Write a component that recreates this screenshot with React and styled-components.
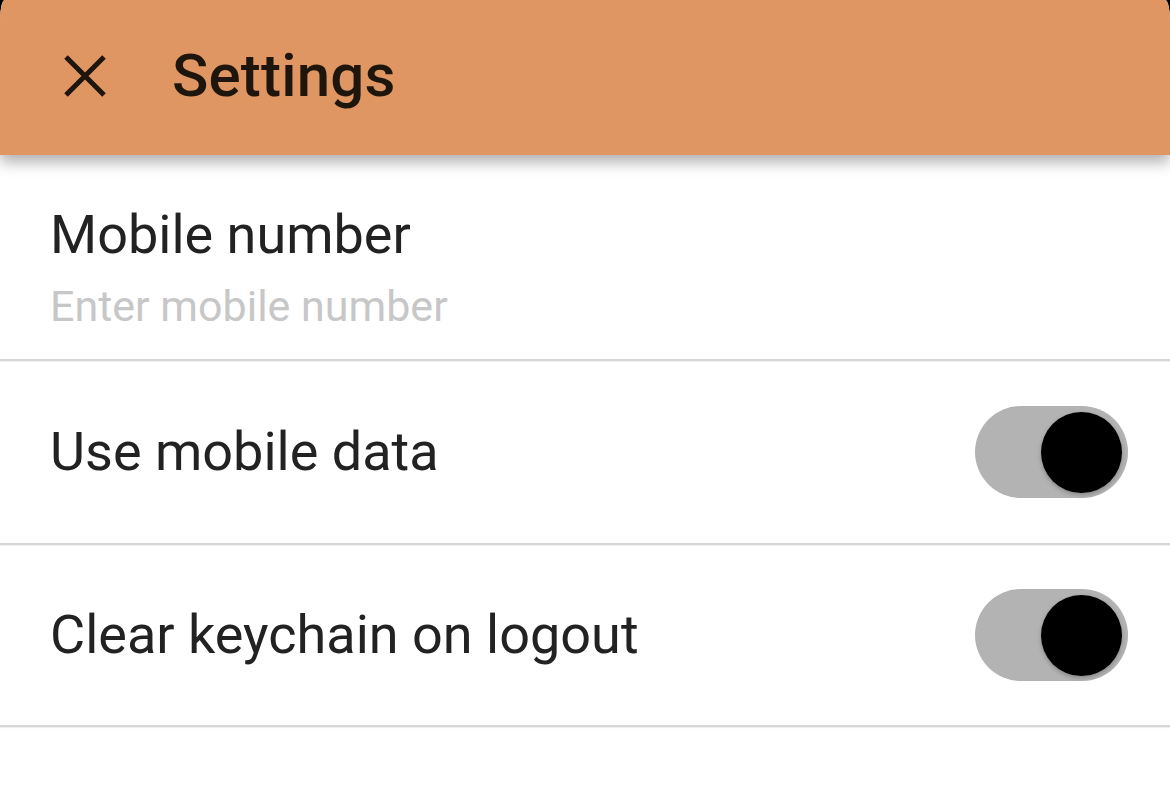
import React from "react";
import styled, { createGlobalStyle } from "styled-components";

const Global = createGlobalStyle`
  html, body { margin: 0; padding: 0; background: #000; }
  body { font-family: Roboto, "Liberation Sans", sans-serif; }
`;

const Page = styled.div`
  min-height: 786px;
  background: #fff;
  border-radius: 5px 5px 0 0 / 20px 20px 0 0;
  overflow: hidden;
`;

const Header = styled.header`
  position: relative;
  z-index: 1;
  height: 155px;
  display: flex;
  align-items: center;
  padding-left: 62px;
  gap: 64px;
  background: #e09663;
  box-shadow: 0 7px 14px rgba(0, 0, 0, 0.32);
  box-sizing: border-box;
`;

const CloseButton = styled.button`
  all: unset;
  width: 46px;
  height: 46px;
  display: flex;
  align-items: center;
  justify-content: center;
  margin-top: -4px;
`;

const Title = styled.h1`
  margin: 0;
  font-size: 60px;
  font-weight: 500;
  color: #1e150d;
  margin-top: -4px;
  letter-spacing: 0.2px;
`;

const Row = styled.div`
  display: flex;
  align-items: center;
  justify-content: space-between;
  box-sizing: border-box;
  height: ${(p) => p.h}px;
  padding: ${(p) => p.pt || 0}px 42px 0 50px;
  border-bottom: 2px solid #d6d6d6;
  box-shadow: 0 1px 1px rgba(0, 0, 0, 0.06);
`;

const Field = styled.div`
  display: flex;
  flex-direction: column;
  gap: 13px;
`;

const Label = styled.div`
  font-size: 54px;
  color: #222;
  line-height: 1.2;
`;

const Placeholder = styled.div`
  font-size: 43px;
  color: #c7c7c7;
  line-height: 1.2;
`;

const Track = styled.div`
  width: 153px;
  height: 92px;
  border-radius: 46px;
  background: #b3b3b3;
  display: flex;
  align-items: center;
  justify-content: flex-end;
  padding: 0 6px;
  box-sizing: border-box;
`;

const Thumb = styled.div`
  width: 81px;
  height: 81px;
  border-radius: 50%;
  background: #000;
  box-shadow: 0 2px 4px rgba(0, 0, 0, 0.25);
`;

const Toggle = () => (
  <Track>
    <Thumb />
  </Track>
);

export default function App() {
  return (
    <>
      <Global />
      <Page>
        <Header>
          <CloseButton aria-label="Close">
            <svg width="44" height="44" viewBox="0 0 44 44">
              <path d="M3 3 L41 41 M41 3 L3 41" stroke="#1e150d" strokeWidth="5" fill="none" />
            </svg>
          </CloseButton>
          <Title>Settings</Title>
        </Header>
        <Row h={206} pt={22}>
          <Field>
            <Label>Mobile number</Label>
            <Placeholder>Enter mobile number</Placeholder>
          </Field>
        </Row>
        <Row h={184}>
          <Label>Use mobile data</Label>
          <Toggle />
        </Row>
        <Row h={182}>
          <Label>Clear keychain on logout</Label>
          <Toggle />
        </Row>
      </Page>
    </>
  );
}
